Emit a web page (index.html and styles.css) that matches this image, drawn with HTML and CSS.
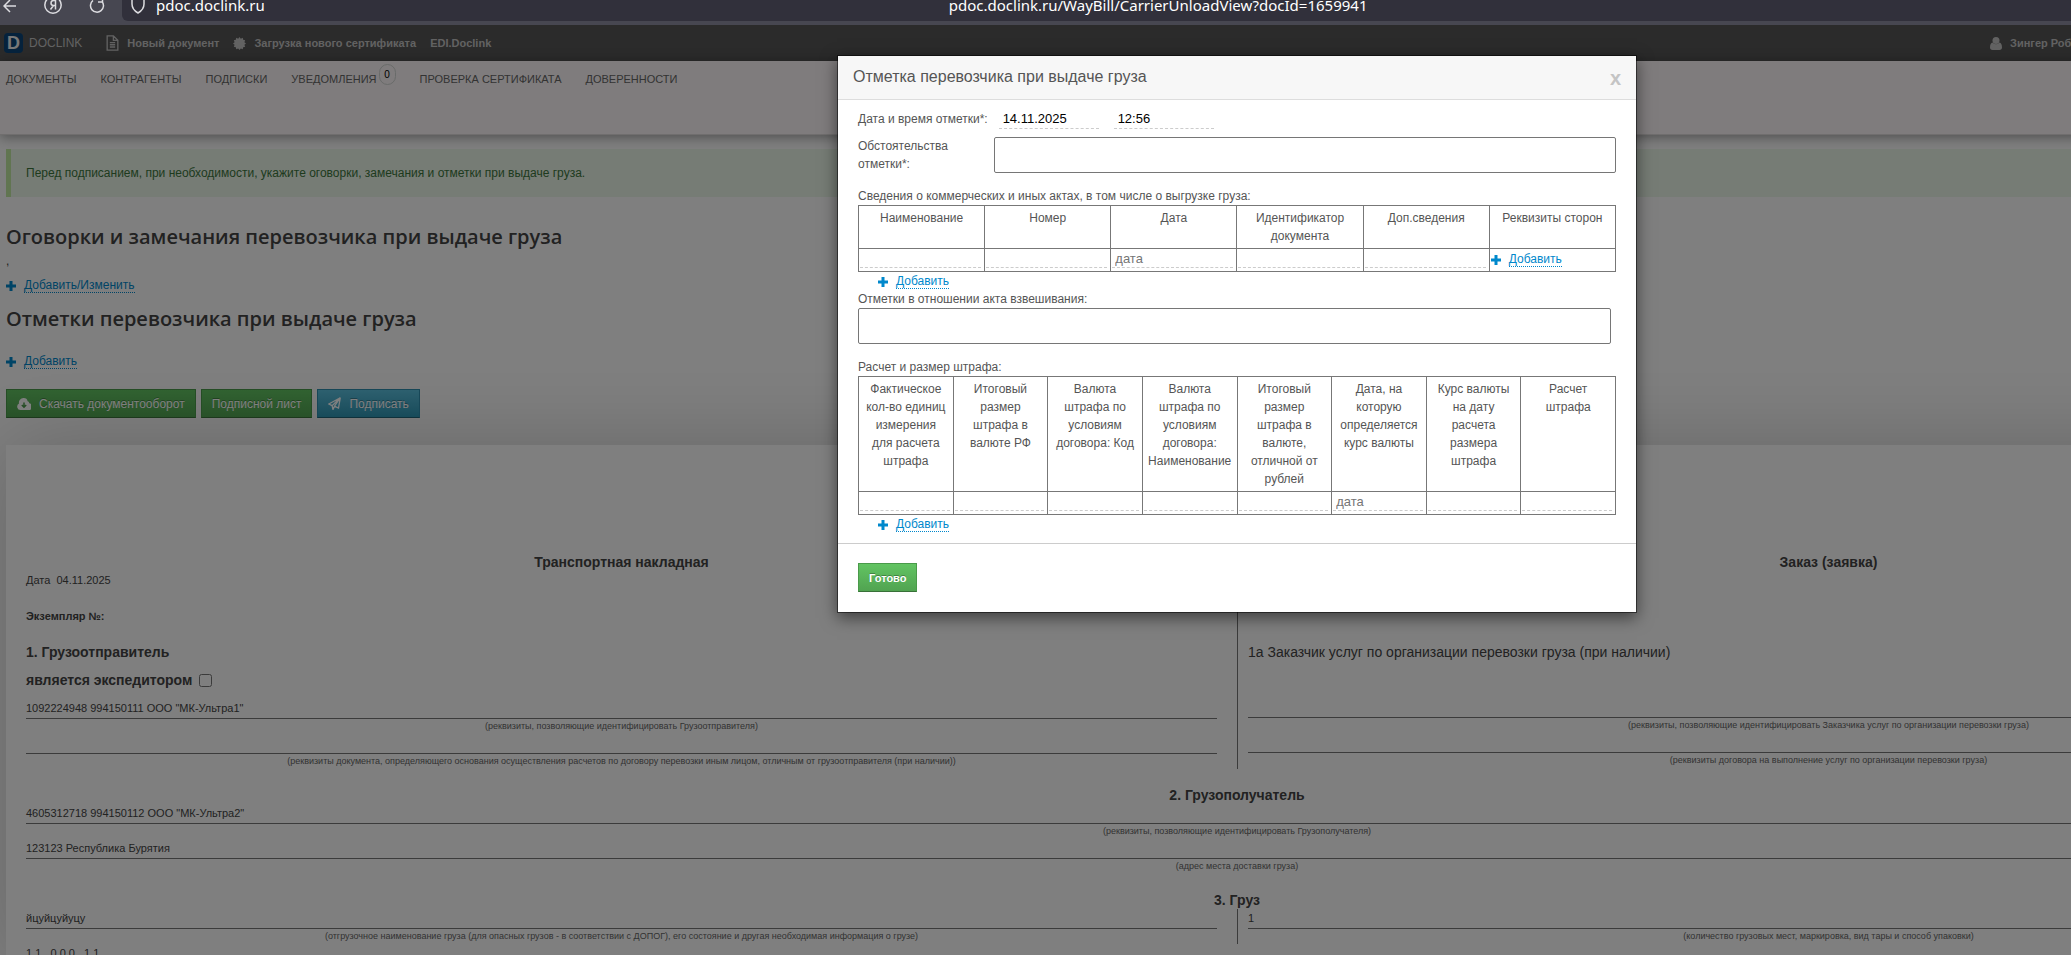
FILE: index.html
```html
<!DOCTYPE html>
<html lang="ru">
  <head>
    <meta charset="UTF-8" />
    <title>Отметка перевозчика при выдаче груза</title>
    <link rel="stylesheet" href="styles.css">
  </head>

  <body>
    <div class="browser">
      <div class="browser-buttons">
        <svg width="14" height="16" viewBox="0 2 14 16"><path d="M13 8H1M7 2L1 8l6 6" /></svg>
        <svg width="18" height="18" viewBox="0 4 18 18"><circle cx="9" cy="9" r="8.2" /><path d="M11.5 13.500V4.500H9.500a2.500 2.500 0 0 0 0 5h2M9.500 9.500l-3 4" /></svg>
        <svg width="16" height="18" viewBox="0 4 16 18"><path d="M4 4.500a6.500 6.500 0 1 0 9 1M13.500 1v5H9" /></svg>
      </div>
      <div class="address">
        <svg width="14" height="18" viewBox="0 4 14 18"><path d="M7 1L1 3.500V8c0 4 2.500 7 6 9 3.500-2 6-5 6-9V3.500z" /></svg>
        <span class="host">pdoc.doclink.ru</span>
        <span class="url">pdoc.doclink.ru/WayBill/CarrierUnloadView?docId=1659941</span>
      </div>
    </div>

    <div class="page">
      <nav class="topbar">
        <a href="#" class="brand"><span class="logo">D</span>DOCLINK</a>
        <a href="#">
          <svg width="13" height="16" viewBox="0 0 14 18" fill="none" stroke="currentColor" stroke-width="1.500"><path d="M1 1h7l5 5v11H1zM8 1v5h5M4 8.500h6M4 11h6M4 13.500h6" /></svg>
          Новый документ
        </a>
        <a href="#">
          <svg width="13" height="13" viewBox="-8 -8 16 16" fill="currentColor"><path d="M0-8L1.600-6 4-7l.5 2.500L7-4 6 -1.600 8 0 6 1.600 7 4l-2.500.5L4 7 1.600 6 0 8l-1.600-2L-4 7l-.5-2.500L-7 4l1-2.400L-8 0l2-1.600L-7-4l2.500-.5L-4-7l2.400 1z" /></svg>
          Загрузка нового сертификата
        </a>
        <a href="#">EDI.Doclink</a>
        <a href="#" class="user">
          <svg width="12" height="13" viewBox="0 0 12 13" fill="currentColor"><circle cx="6" cy="3.500" r="3.500" /><path d="M2.500 5.500C1 6 0 7.500 0 10.500 0 12 1 13 2.500 13h7c1.500 0 2.500-1 2.500-2.500 0-3-1-4.500-2.500-5a4.500 4.500 0 0 1-7 0z" /></svg>
          Зингер Роб
        </a>
      </nav>

      <header class="menu">
        <a href="#">ДОКУМЕНТЫ</a>
        <a href="#">КОНТРАГЕНТЫ</a>
        <a href="#">ПОДПИСКИ</a>
        <a href="#" class="with-badge">УВЕДОМЛЕНИЯ<span class="badge">0</span></a>
        <a href="#">ПРОВЕРКА СЕРТИФИКАТА</a>
        <a href="#">ДОВЕРЕННОСТИ</a>
      </header>

      <main>
        <div class="alert">Перед подписанием, при необходимости, укажите оговорки, замечания и отметки при выдаче груза.</div>

        <h2>Оговорки и замечания перевозчика при выдаче груза</h2>
        <p class="remark">,</p>
        <a href="#" class="add"><svg class="plus" viewBox="0 0 10 10"><path d="M5 0v10M0 5h10" /></svg><span>Добавить/Изменить</span></a>

        <h2>Отметки перевозчика при выдаче груза</h2>
        <p class="remark remark-empty"></p>
        <a href="#" class="add"><svg class="plus" viewBox="0 0 10 10"><path d="M5 0v10M0 5h10" /></svg><span>Добавить</span></a>

        <div class="actions">
          <button class="btn btn-success">
            <svg width="14" height="12" viewBox="0 0 14 12"><path fill="#fff" d="M3.500 12A3.400 3.400 0 0 1 2 5.600 4.600 4.600 0 0 1 6.600 0a4 4 0 0 1 4 3.200c.8 0 1.600.8 1.600 2A3.400 3.400 0 0 1 11 12z" /><path d="M7 4.500v4M4.800 7L7 9.200 9.200 7" fill="none" stroke="#4c9a4c" stroke-width="1.500" /></svg>
            Скачать документооборот
          </button>
          <button class="btn btn-success">Подписной лист</button>
          <button class="btn btn-info">
            <svg width="13" height="13" viewBox="0 0 13 13" fill="none" stroke="#fff" stroke-width="1.300"><path d="M12.300.7L.8 7l3.300 1.600zM12.300.7L10.500 11l-4-1.800zM4.100 8.600L5 12.500l1.500-3.300" /></svg>
            Подписать
          </button>
        </div>
      </main>

      <section class="document">
        <div class="columns">
          <div class="col">
            <h3 class="center">Транспортная накладная</h3>
            <p class="line">Дата &nbsp;04.11.2025</p>
            <p class="line copy">Экземпляр №:</p>
            <h3 class="sender">1. Грузоотправитель</h3>
            <h3 class="forwarder"><label for="forwarder">является экспедитором</label><input type="checkbox" id="forwarder"></h3>
            <p class="field">1092224948 994150111 ООО "МК-Ультра1"</p>
            <p class="hint">(реквизиты, позволяющие идентифицировать Грузоотправителя)</p>
            <p class="field"></p>
            <p class="hint">(реквизиты документа, определяющего основания осуществления расчетов по договору перевозки иным лицом, отличным от грузоотправителя (при наличии))</p>
          </div>
          <div class="col col-right">
            <h3 class="center">Заказ (заявка)</h3>
            <p class="customer">1а Заказчик услуг по организации перевозки груза (при наличии)</p>
            <p class="field"></p>
            <p class="hint">(реквизиты, позволяющие идентифицировать Заказчика услуг по организации перевозки груза)</p>
            <p class="field"></p>
            <p class="hint">(реквизиты договора на выполнение услуг по организации перевозки груза)</p>
          </div>
        </div>

        <h3 class="center part">2. Грузополучатель</h3>
        <p class="field">4605312718 994150112 ООО "МК-Ультра2"</p>
        <p class="hint">(реквизиты, позволяющие идентифицировать Грузополучателя)</p>
        <p class="field">123123 Республика Бурятия</p>
        <p class="hint">(адрес места доставки груза)</p>

        <h3 class="center part">3. Груз</h3>
        <div class="columns">
          <div class="col">
            <p class="field">йцуйцуйуцу</p>
            <p class="hint">(отгрузочное наименование груза (для опасных грузов - в соответствии с ДОПОГ), его состояние и другая необходимая информация о грузе)</p>
          </div>
          <div class="col col-right">
            <p class="field">1</p>
            <p class="hint">(количество грузовых мест, маркировка, вид тары и способ упаковки)</p>
          </div>
        </div>
        <p class="field">1.1 , 0.0.0 , 1.1</p>
      </section>

      <div class="overlay">
        <form class="modal">
          <div class="modal-header">
            <h1>Отметка перевозчика при выдаче груза</h1>
            <button type="button" class="close">x</button>
          </div>

          <div class="modal-body">
            <div class="row">
              <label for="date">Дата и время отметки*:</label>
              <input type="text" id="date" class="editable" value="14.11.2025">
              <input type="text" class="editable" aria-label="Время отметки" value="12:56">
            </div>
            <div class="row row-top">
              <label for="reason">Обстоятельства отметки*:</label>
              <textarea id="reason"></textarea>
            </div>

            <p class="caption">Сведения о коммерческих и иных актах, в том числе о выгрузке груза:</p>
            <table>
              <tr>
                <th>Наименование</th>
                <th>Номер</th>
                <th>Дата</th>
                <th>Идентификатор документа</th>
                <th>Доп.сведения</th>
                <th>Реквизиты сторон</th>
              </tr>
              <tr>
                <td><input type="text" aria-label="Наименование"></td>
                <td><input type="text" aria-label="Номер"></td>
                <td><input type="text" aria-label="Дата" placeholder="дата"></td>
                <td><input type="text" aria-label="Идентификатор документа"></td>
                <td><input type="text" aria-label="Доп.сведения"></td>
                <td><a href="#" class="add"><svg class="plus" viewBox="0 0 10 10"><path d="M5 0v10M0 5h10" /></svg><span>Добавить</span></a></td>
              </tr>
            </table>
            <a href="#" class="add indent"><svg class="plus" viewBox="0 0 10 10"><path d="M5 0v10M0 5h10" /></svg><span>Добавить</span></a>

            <label for="weighing" class="caption-label">Отметки в отношении акта взвешивания:</label>
            <textarea id="weighing" class="weighing"></textarea>

            <p class="caption">Расчет и размер штрафа:</p>
            <table>
              <tr>
                <th>Фактическое кол-во единиц измерения для расчета штрафа</th>
                <th>Итоговый размер штрафа в валюте РФ</th>
                <th>Валюта штрафа по условиям договора: Код</th>
                <th>Валюта штрафа по условиям договора: Наименование</th>
                <th>Итоговый размер штрафа в валюте, отличной от рублей</th>
                <th>Дата, на которую определяется курс валюты</th>
                <th>Курс валюты на дату расчета размера штрафа</th>
                <th>Расчет штрафа</th>
              </tr>
              <tr>
                <td><input type="text" aria-label="Фактическое кол-во единиц"></td>
                <td><input type="text" aria-label="Размер штрафа в валюте РФ"></td>
                <td><input type="text" aria-label="Код валюты"></td>
                <td><input type="text" aria-label="Наименование валюты"></td>
                <td><input type="text" aria-label="Размер штрафа в другой валюте"></td>
                <td><input type="text" aria-label="Дата курса" placeholder="дата"></td>
                <td><input type="text" aria-label="Курс валюты"></td>
                <td><input type="text" aria-label="Расчет штрафа"></td>
              </tr>
            </table>
            <a href="#" class="add indent"><svg class="plus" viewBox="0 0 10 10"><path d="M5 0v10M0 5h10" /></svg><span>Добавить</span></a>
          </div>

          <div class="modal-footer">
            <button type="button" class="btn btn-success btn-done">Готово</button>
          </div>
        </form>
      </div>
    </div>
  </body>
</html>
```
FILE: styles.css
```css
* {
  box-sizing: border-box;
}

body {
  margin: 0;
  height: 100vh;
  overflow: hidden;
  font-family: "Liberation Sans", Arial, sans-serif;
  font-size: 12px;
  line-height: 18px;
  color: #444;
}

h1,
h2,
h3,
p {
  margin: 0;
}

a {
  color: inherit;
  text-decoration: none;
}

/* browser */
.browser {
  display: flex;
  height: 25px;
  background-color: #474751;
  color: #fff;
  font-family: "Noto Sans", sans-serif;
  font-size: 15px;
  line-height: 10px;
}

.browser svg {
  fill: none;
  stroke: #dcdce0;
  stroke-width: 1.5;
}

.browser-buttons {
  display: flex;
  align-items: flex-start;
  gap: 27px;
  width: 122px;
  padding-left: 3px;
}

.address {
  flex: 1;
  display: flex;
  height: 21px;
  padding-left: 9px;
  background-color: #31303b;
  border-radius: 0 0 0 6px;
}

.host {
  margin-left: 11px;
}

.url {
  flex: 1;
  padding-left: 684px;
}

/* page */
.page {
  position: relative;
  min-width: 2474px;
  height: calc(100vh - 25px);
  overflow: hidden;
  background-color: #fff;
}

.topbar {
  display: flex;
  align-items: center;
  gap: 14px;
  height: 36px;
  padding-left: 4px;
  background-color: #565656;
  color: #c4c4c4;
  font-size: 11px;
  font-weight: bold;
}

.topbar a {
  display: flex;
  align-items: center;
  gap: 8px;
}

.topbar .brand {
  gap: 6px;
  margin-right: 10px;
  font-size: 12px;
  font-weight: normal;
}

.logo {
  width: 19px;
  height: 20px;
  border-radius: 4px;
  background-color: #0a4478;
  color: #f0f0f0;
  font-size: 18px;
  line-height: 20px;
  font-weight: bold;
  text-align: center;
}

.topbar .user {
  width: 484px;
  margin-left: auto;
}

.menu {
  display: flex;
  gap: 24px;
  height: 74px;
  padding: 9px 6px;
  background-color: #fef9fa;
  border-bottom: 1px solid #e0dcdd;
  box-shadow: 0 2px 12px rgba(0, 0, 0, 0.4);
  color: #666;
  font-size: 11px;
}

.with-badge {
  display: flex;
  gap: 2px;
}

.badge {
  width: 17px;
  height: 21px;
  margin-top: -6px;
  border: 1px solid #d3d6d4;
  border-radius: 9px;
  font-size: 10px;
  line-height: 19px;
  text-align: center;
  color: #000;
}

main {
  padding: 14px 6px 0;
}

.alert {
  height: 48px;
  margin-bottom: 25px;
  padding-left: 15px;
  border-left: 5px solid #c2eaa2;
  background-color: #edf8ea;
  color: #3c763d;
  line-height: 48px;
}

h2 {
  font-family: "Open Sans", sans-serif;
  font-size: 20px;
  line-height: 30px;
  font-weight: 600;
}

.remark {
  height: 24px;
}

.remark-empty {
  height: 18px;
}

.add {
  display: flex;
  align-items: center;
  gap: 8px;
  width: fit-content;
  color: #08c;
  line-height: 14px;
}

.add span {
  border-bottom: 1px dotted #08c;
}

.plus {
  width: 10px;
  height: 10px;
  stroke: #08c;
  stroke-width: 3;
}

main .add {
  margin: 2px 0 11px;
}

.actions {
  display: flex;
  gap: 5px;
  margin-top: 20px;
}

.btn {
  display: flex;
  align-items: center;
  gap: 8px;
  height: 29px;
  padding: 0 10px;
  border: 1px solid #4a9a4a;
  border-bottom-color: #387038;
  color: #fff;
  font-family: inherit;
  font-size: 12px;
  line-height: 18px;
  text-shadow: 0 -1px 0 rgba(0, 0, 0, 0.3);
}

.btn-success {
  background: linear-gradient(#62c462, #51a351);
}

.btn-info {
  background: linear-gradient(#5bc0de, #2f96b4);
  border-color: #2f8fae;
  border-bottom-color: #1f6377;
}

/* document */
.document {
  margin: 27px 6px 0;
  padding: 108px 20px 0;
  background-color: #fff;
  box-shadow: 0 0 80px rgba(0, 0, 0, 0.2);
}

.columns {
  display: flex;
}

.col {
  width: 50%;
  padding-right: 20px;
}

.col-right {
  padding: 0 39px 0 10px;
  border-left: 1px solid #777;
}

h3 {
  font-size: 14px;
  line-height: 18px;
}

.center {
  text-align: center;
}

.line {
  font-size: 11px;
}

.copy {
  margin-top: 18px;
  font-weight: bold;
}

.sender {
  margin-top: 18px;
}

.forwarder {
  display: flex;
  align-items: center;
  gap: 7px;
  margin: 10px 0;
}

.forwarder input {
  width: 13px;
  height: 13px;
  margin: 0;
}

.customer {
  margin: 72px 0 37px;
  font-size: 14px;
}

.field {
  height: 20px;
  border-bottom: 1px solid #777;
  font-size: 11px;
}

.hint {
  height: 15px;
  font-size: 9px;
  line-height: 15px;
  text-align: center;
  color: #666;
}

.part {
  margin-top: 17px;
}

/* modal */
.overlay {
  position: absolute;
  inset: 0;
  padding-top: 30px;
  background-color: rgba(0, 0, 0, 0.5);
}

.modal {
  width: 800px;
  margin: 0 auto;
  background-color: #fff;
  border: 1px solid rgba(0, 0, 0, 0.5);
  background-clip: padding-box;
  box-shadow: 0 5px 15px rgba(0, 0, 0, 0.5);
  color: #555;
}

.modal-header {
  display: flex;
  justify-content: space-between;
  height: 44px;
  padding: 11px 15px;
  background-color: #f7f7f7;
  border-bottom: 1px solid #ddd;
}

.modal-header h1 {
  font-size: 16px;
  line-height: 20px;
  font-weight: normal;
}

.close {
  padding: 0;
  border: none;
  background: none;
  color: #c4c4c4;
  font-family: inherit;
  font-size: 20px;
  line-height: 14px;
  font-weight: bold;
}

.modal-body {
  padding: 8px 20px 10px;
  border-bottom: 1px solid #ccc;
}

.row {
  display: flex;
  gap: 15px;
}

.row label {
  padding-top: 2px;
}

.row label + input {
  margin-left: -4px;
}

.row-top {
  gap: 0;
  margin-top: 8px;
}

.row-top label {
  width: 136px;
  padding: 0 20px 0 0;
}

input[type="text"] {
  height: 21px;
  padding: 0 4px;
  border: none;
  border-bottom: 1px dashed #ccc;
  background: none;
  color: #000;
  font-family: inherit;
  font-size: 13px;
}

.editable {
  width: 100px;
}

textarea {
  flex: 1;
  display: block;
  height: 36px;
  border: 1px solid #767676;
  border-radius: 2px;
  resize: none;
}

.caption {
  margin-top: 14px;
}

table {
  width: 100%;
  table-layout: fixed;
  border-collapse: collapse;
}

th,
td {
  border: 1px solid #777;
}

th {
  padding: 3px 5px;
  font-weight: normal;
  vertical-align: top;
}

td {
  height: 23px;
  padding: 0 3px 3px 1px;
}

td input[type="text"] {
  display: block;
  width: 100%;
  height: 19px;
  padding: 0 3px;
}

td .add {
  padding-top: 2px;
}

.indent {
  margin: 2px 0 1px 20px;
}

.caption-label {
  display: block;
}

.weighing {
  width: 753px;
}

.modal-footer {
  padding: 19px 20px 20px;
}

.btn-done {
  font-size: 11px;
  font-weight: bold;
}
```
